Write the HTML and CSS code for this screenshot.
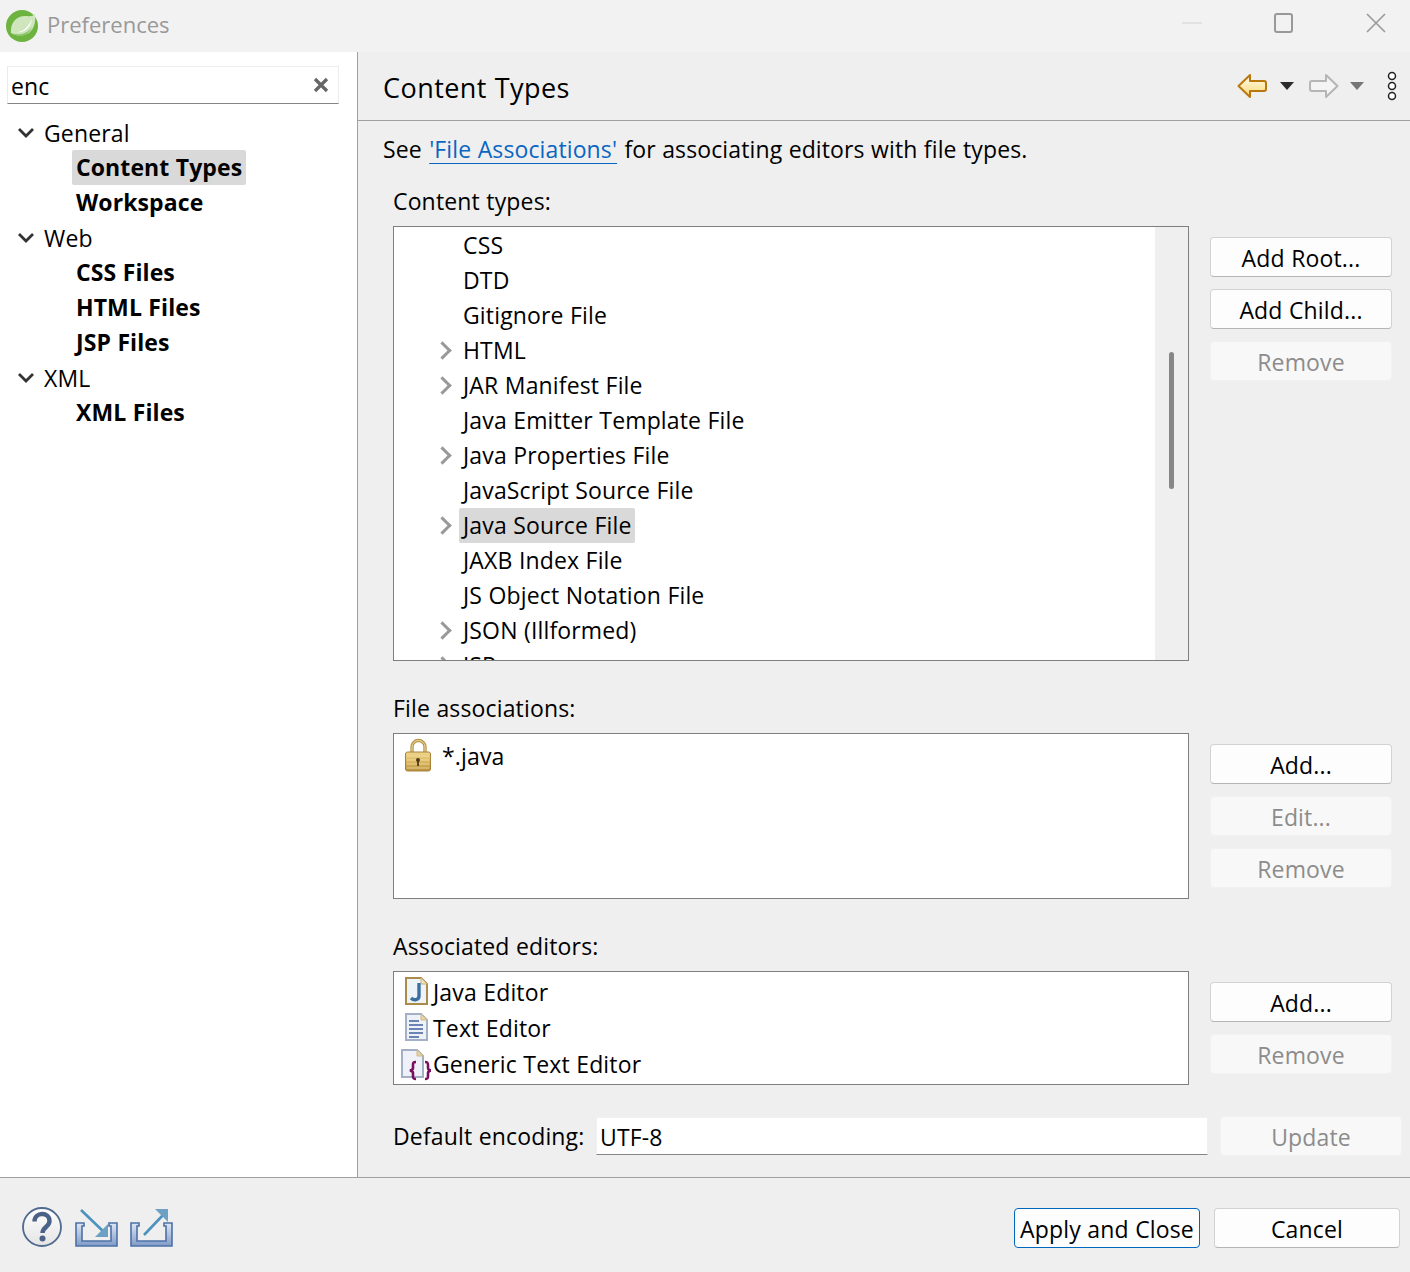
FILE: index.html
```html
<!DOCTYPE html>
<html lang="en">
<head>
<meta charset="utf-8">
<title>Preferences</title>
<link rel="stylesheet" href="styles.css">
</head>
<body>
<div class="window">
  <header class="titlebar">
    <svg class="app-logo" width="34" height="34" viewBox="0 0 34 34">
      <circle cx="17" cy="17" r="16" fill="#6db33f"/>
      <path d="M6 24C5 13 12 6 22 7c4 .5 6 0 8-2 1 8-1 15-6 19-5 3-12 4-18 0z" fill="#cfe6bd"/>
      <path d="M9 23c8 1 14-4 18-13-1 8-7 15-18 13z" fill="#fff"/>
      <path d="M7 24c7 3 15 1 20-6-3 8-11 12-20 6z" fill="#8cc46a"/>
    </svg>
    <span class="app-title">Preferences</span>
    <div class="window-controls">
      <svg width="20" height="20" viewBox="0 0 20 20"><path d="M0 10h20" stroke="#e2e2e2" stroke-width="2"/></svg>
      <svg width="20" height="20" viewBox="0 0 20 20"><rect x="1" y="1" width="17" height="18" rx="2" fill="none" stroke="#999" stroke-width="2"/></svg>
      <svg width="20" height="20" viewBox="0 0 20 20"><path d="M1 1l18 18M19 1L1 19" stroke="#999" stroke-width="1.6"/></svg>
    </div>
  </header>

  <div class="main">
    <aside class="sidebar">
      <div class="search">
        <span class="search-text">enc</span>
        <svg width="16" height="16" viewBox="0 0 16 16"><path d="M2 2l12 12M14 2L2 14" stroke="#666" stroke-width="3.2"/></svg>
      </div>
      <ul class="nav">
        <li class="nav-row"><svg class="chev" width="18" height="12" viewBox="0 0 18 12"><path d="M2 2l7 7 7-7" fill="none" stroke="#333" stroke-width="2.8"/></svg><span>General</span></li>
        <li class="nav-row child"><span class="hl">Content Types</span></li>
        <li class="nav-row child"><span>Workspace</span></li>
        <li class="nav-row"><svg class="chev" width="18" height="12" viewBox="0 0 18 12"><path d="M2 2l7 7 7-7" fill="none" stroke="#333" stroke-width="2.8"/></svg><span>Web</span></li>
        <li class="nav-row child"><span>CSS Files</span></li>
        <li class="nav-row child"><span>HTML Files</span></li>
        <li class="nav-row child"><span>JSP Files</span></li>
        <li class="nav-row"><svg class="chev" width="18" height="12" viewBox="0 0 18 12"><path d="M2 2l7 7 7-7" fill="none" stroke="#333" stroke-width="2.8"/></svg><span>XML</span></li>
        <li class="nav-row child"><span>XML Files</span></li>
      </ul>
    </aside>

    <section class="content">
      <div class="content-head">
        <h1 class="content-title">Content Types</h1>
        <div class="toolbar">
          <svg width="30" height="26" viewBox="0 0 30 26">
            <defs><linearGradient id="gBack" x1="0" y1="0" x2="0" y2="1"><stop offset="0" stop-color="#fffdf0"/><stop offset="1" stop-color="#fbd873"/></linearGradient></defs>
            <path d="M1.5 13L13 2v6h14a2 2 0 0 1 2 2v6a2 2 0 0 1-2 2H13v6z" fill="url(#gBack)" stroke="#b9780f" stroke-width="2" stroke-linejoin="round"/>
          </svg>
          <svg class="tri" width="14" height="8" viewBox="0 0 14 8"><path d="M0 0h14L7 8z" fill="#2b2b2b"/></svg>
          <svg class="fwd" width="30" height="26" viewBox="0 0 30 26"><path d="M28.5 13L17 2v6H3a2 2 0 0 0-2 2v6a2 2 0 0 0 2 2h14v6z" fill="#f4f4f4" stroke="#b5b5b5" stroke-width="2" stroke-linejoin="round"/></svg>
          <svg class="tri" width="14" height="8" viewBox="0 0 14 8"><path d="M0 0h14L7 8z" fill="#757575"/></svg>
          <svg class="dots" width="10" height="30" viewBox="0 0 10 30"><g fill="#fff" stroke="#222" stroke-width="1.5"><circle cx="5" cy="5" r="3.5"/><circle cx="5" cy="15" r="3.5"/><circle cx="5" cy="25" r="3.5"/></g></svg>
        </div>
      </div>

      <div class="content-body">
        <p class="intro">See <a class="link" href="#">'File Associations'</a> for associating editors with file types.</p>

        <div class="group">
          <div class="group-label">Content types:</div>
          <div class="group-row">
            <div class="list tree-list">
              <ul class="tree">
                <li class="tree-row"><span>CSS</span></li>
                <li class="tree-row"><span>DTD</span></li>
                <li class="tree-row"><span>Gitignore File</span></li>
                <li class="tree-row has-kids"><span>HTML</span></li>
                <li class="tree-row has-kids"><span>JAR Manifest File</span></li>
                <li class="tree-row"><span>Java Emitter Template File</span></li>
                <li class="tree-row has-kids"><span>Java Properties File</span></li>
                <li class="tree-row"><span>JavaScript Source File</span></li>
                <li class="tree-row has-kids"><span class="hl">Java Source File</span></li>
                <li class="tree-row"><span>JAXB Index File</span></li>
                <li class="tree-row"><span>JS Object Notation File</span></li>
                <li class="tree-row has-kids"><span>JSON (Illformed)</span></li>
                <li class="tree-row has-kids"><span>JSP</span></li>
              </ul>
              <div class="scrollbar"><div class="thumb"></div></div>
            </div>
            <div class="buttons">
              <button class="btn">Add Root...</button>
              <button class="btn">Add Child...</button>
              <button class="btn" disabled>Remove</button>
            </div>
          </div>
        </div>

        <div class="group">
          <div class="group-label">File associations:</div>
          <div class="group-row">
            <div class="list assoc-list">
              <div class="file-row">
                <svg width="30" height="36" viewBox="0 0 30 36">
                  <defs>
                    <linearGradient id="gLock" x1="0" y1="0" x2="0" y2="1"><stop offset="0" stop-color="#f0d68c"/><stop offset=".5" stop-color="#dcb860"/><stop offset="1" stop-color="#b98f3c"/></linearGradient>
                  </defs>
                  <path d="M8 15V9a6.5 6.5 0 0 1 13 0v6" fill="none" stroke="#b8974a" stroke-width="3.4"/>
                  <path d="M8 15V9a6.5 6.5 0 0 1 13 0v6" fill="none" stroke="#ecd9a0" stroke-width="1"/>
                  <rect x="1.5" y="14" width="25" height="19" rx="2" fill="url(#gLock)" stroke="#a8823a"/>
                  <path d="M3 18h22M3 22h22M3 26h22M3 30h22" stroke="#f1dfa8" stroke-width=".8"/>
                  <circle cx="14" cy="22" r="2" fill="#4a3a18"/><path d="M14 22v6" stroke="#4a3a18" stroke-width="1.8"/>
                </svg>
                <span class="assoc-text">*.java</span>
              </div>
            </div>
            <div class="buttons">
              <button class="btn">Add...</button>
              <button class="btn" disabled>Edit...</button>
              <button class="btn" disabled>Remove</button>
            </div>
          </div>
        </div>

        <div class="group">
          <div class="group-label">Associated editors:</div>
          <div class="group-row">
            <div class="list editors-list">
              <div class="editor-row">
                <svg width="30" height="36" viewBox="0 0 30 36">
                  <path d="M5 4h15l6 6v20H5z" fill="#eef3fa" stroke="#a98c4a" stroke-width="2"/>
                  <path d="M20 4v6h6" fill="#f3e3bd" stroke="#c9b27a"/>
                  <path d="M18 9v13c0 4-5 5-8 2" fill="none" stroke="#3d6f9e" stroke-width="3.4"/>
                </svg>
                <span>Java Editor</span>
              </div>
              <div class="editor-row">
                <svg width="30" height="36" viewBox="0 0 30 36">
                  <path d="M5 4h15l6 6v20H5z" fill="#eef2f8" stroke="#a3b1c7" stroke-width="2"/>
                  <path d="M20 4v6h6z" fill="#e9d6a4" stroke="#cdb987"/>
                  <path d="M8 11h10M8 15h14M8 19h14M8 23h14M8 27h10" stroke="#6a85b4" stroke-width="2"/>
                </svg>
                <span>Text Editor</span>
              </div>
              <div class="editor-row">
                <svg width="30" height="36" viewBox="0 0 30 36">
                  <path d="M1 4h15l6 6v21H1z" fill="#eef2f8" stroke="#a3afc4" stroke-width="2"/>
                  <path d="M16 4v6h6z" fill="#e9d6a4" stroke="#cdb987"/>
                  <path d="M15 16c-3 0-3 1-3 3v3c0 2-1 2-3 2.5 2 .5 3 .5 3 2.5v3c0 2 0 3 3 3M24 16c3 0 3 1 3 3v3c0 2 1 2 3 2.5-2 .5-3 .5-3 2.5v3c0 2 0 3-3 3" fill="none" stroke="#7a0f5e" stroke-width="2.6"/>
                </svg>
                <span>Generic Text Editor</span>
              </div>
            </div>
            <div class="buttons">
              <button class="btn">Add...</button>
              <button class="btn" disabled>Remove</button>
            </div>
          </div>
        </div>

        <div class="encoding">
          <label class="encoding-label">Default encoding:</label>
          <div class="encoding-input">UTF-8</div>
          <button class="btn" disabled>Update</button>
        </div>
      </div>
    </section>
  </div>

  <footer class="footer">
    <div class="footer-icons">
      <svg width="42" height="44" viewBox="0 0 42 44">
        <defs><linearGradient id="gHelp" x1="0" y1="0" x2="0" y2="1"><stop offset="0" stop-color="#fff"/><stop offset="1" stop-color="#e4e4e4"/></linearGradient></defs>
        <circle cx="20" cy="22" r="19" fill="url(#gHelp)" stroke="#4f6a8f" stroke-width="1.8"/>
        <path d="M12.5 16.5c0-10 15-10 15-.5 0 6-7 6-7 12" fill="none" stroke="#4a6288" stroke-width="4.4"/>
        <circle cx="20.5" cy="33.5" r="3" fill="#4a6288"/>
      </svg>
      <svg width="44" height="44" viewBox="0 0 44 44">
        <defs><linearGradient id="gTray" x1="0" y1="0" x2="0" y2="1"><stop offset="0" stop-color="#dfe7f3"/><stop offset="1" stop-color="#7f9bc8"/></linearGradient></defs>
        <path d="M1 18h8v3H7v15h29V21h-2v-3h8v23H1z" fill="url(#gTray)" stroke="#4d71a6" stroke-width="1.6"/>
        <path d="M6 5l24 23" stroke="#4c92bf" stroke-width="2.6"/>
        <path d="M33 19v13H20z" fill="#6ca0c4"/>
      </svg>
      <svg width="44" height="44" viewBox="0 0 44 44">
        <path d="M1 18h8v3H7v15h29V21h-2v-3h8v23H1z" fill="url(#gTray)" stroke="#4d71a6" stroke-width="1.6"/>
        <path d="M14 30L34 9" stroke="#4c92bf" stroke-width="2.6"/>
        <path d="M38 4v13L25 4z" fill="#6ca0c4"/>
      </svg>
    </div>
    <div class="footer-buttons">
      <button class="btn btn-default">Apply and Close</button>
      <button class="btn">Cancel</button>
    </div>
  </footer>
</div>
</body>
</html>
```
FILE: styles.css
```css
* { box-sizing: border-box; }
html, body { margin: 0; padding: 0; }
body { font-family: "Open Sans", "Noto Sans", sans-serif; font-size: 23px; letter-spacing: .15px; word-spacing: .3px; color: #000; background: #efefef; }
ul { list-style: none; margin: 0; padding: 0; }
.window { width: 1410px; height: 1272px; display: flex; flex-direction: column; overflow: hidden; }

.titlebar { height: 52px; flex: none; background: #f2f2f2; display: flex; align-items: center; padding-left: 5px; }
.app-title { margin-left: 8px; color: #999; font-size: 22px; letter-spacing: 0; margin-bottom: 4px; }
.window-controls { margin-left: auto; display: flex; gap: 72px; padding-right: 24px; margin-top: -6px; }

.main { height: 1125px; flex: none; display: flex; }
.sidebar { width: 358px; flex: none; background: #fff; border-right: 1px solid #a0a0a0; padding-top: 14px; }
.search { margin-left: 7px; width: 332px; height: 38px; background: #fff; border: 1px solid #ececec; border-bottom: 1px solid #858585; display: flex; align-items: center; justify-content: space-between; padding: 0 9px 0 3px; }
.search-text { margin-top: 2px; }
.nav { margin-top: 11px; }
.nav-row { height: 35px; display: flex; align-items: center; padding-left: 17px; }
.nav-row .chev { margin-right: 9px; }
.nav-row.child { padding-left: 72px; font-weight: 700; letter-spacing: .1px; }
.nav-row.child span { padding: 0 4px; height: 35px; line-height: 35px; }
.hl { background: #d9d9d9; border-radius: 2px; }

.content { flex: 1; display: flex; flex-direction: column; min-width: 0; }
.content-head { height: 69px; flex: none; border-bottom: 1px solid #a0a0a0; display: flex; align-items: center; padding: 0 13px 0 25px; }
.content-title { margin: 0; padding-top: 3px; font-size: 27px; font-weight: 500; letter-spacing: .45px; }
.toolbar { margin-left: auto; display: flex; align-items: center; }
.toolbar .tri { margin-left: 13px; margin-top: -1px; }
.toolbar .fwd { margin-left: 15px; }
.toolbar .fwd + .tri { margin-left: 11px; }
.toolbar .dots { margin-left: 23px; }

.content-body { flex: 1; padding-left: 25px; }
.intro { margin: 0; height: 64px; padding-top: 11px; line-height: 34px; letter-spacing: .12px; }
.link { color: #0a66c2; padding: 0 1px; text-decoration: underline; text-decoration-thickness: 1px; text-underline-offset: 5px; }

.group { margin-left: 10px; margin-bottom: 31px; }
.group-label { height: 34px; line-height: 32px; margin-bottom: 7px; }
.group-row { display: flex; }
.list { width: 796px; flex: none; background: #fff; border: 1px solid #7f7f7f; overflow: hidden; }
.tree-list { height: 435px; display: flex; }
.tree { flex: 1; padding-top: 1px; }
.scrollbar { width: 33px; flex: none; background: #efefef; padding: 125px 0 0 14px; }
.thumb { width: 5px; height: 137px; background: #878787; border-radius: 3px; }
.tree-row { height: 35px; display: flex; align-items: center; padding-left: 65px; position: relative; }
.tree-row span { padding: 0 4px; line-height: 35px; height: 35px; }
.has-kids::before { content: ""; position: absolute; left: 42px; top: 11px; width: 10px; height: 10px; border-top: 3px solid #999; border-right: 3px solid #999; transform: rotate(45deg); }

.assoc-list { height: 166px; }
.file-row { display: flex; align-items: center; height: 36px; margin-top: 4px; padding-left: 10px; }
.assoc-text { margin-left: 8px; }
.editors-list { height: 114px; padding-top: 2px; }
.editor-row { display: flex; align-items: center; height: 36px; padding-left: 7px; gap: 2px; }

.buttons { margin-left: 21px; width: 182px; padding-top: 11px; display: flex; flex-direction: column; gap: 12px; }
.btn { font: inherit; letter-spacing: inherit; word-spacing: inherit; width: 182px; height: 40px; padding: 2px 0 0; color: #000; background: #fdfdfd; border: 1px solid #d2d2d2; border-bottom-color: #b5b5b5; border-radius: 4px; }
.btn:disabled { color: #8c8c8c; background: #f8f8f8; border: 1px solid #f1f1f1; }

.encoding { margin-left: 10px; display: flex; align-items: center; height: 40px; }
.encoding-label { width: 203px; flex: none; }
.encoding-input { width: 612px; height: 38px; line-height: 38px; background: #fff; border: 1px solid #f1f1f1; border-bottom: 1px solid #858585; padding-left: 3px; }
.encoding .btn { margin-left: 12px; }

.footer { flex: 1; border-top: 1px solid #a0a0a0; display: flex; justify-content: space-between; padding: 27px 10px 0 22px; }
.footer-icons { display: flex; gap: 11px; height: 44px; }
.footer-buttons { display: flex; gap: 14px; margin-top: 3px; }
.footer-buttons .btn { width: 186px; }
.btn-default { border: 1px solid #0067c0; }
```
